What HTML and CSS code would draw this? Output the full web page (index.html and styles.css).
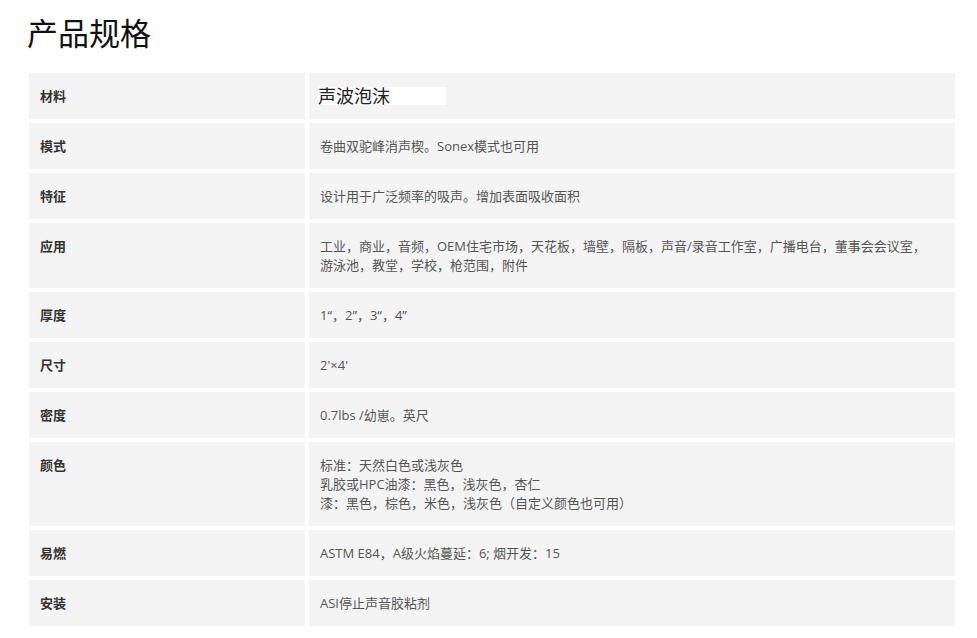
FILE: index.html
```html
<!DOCTYPE html>
<html lang="zh-CN">
  <head>
    <meta charset="UTF-8" />
    <meta name="viewport" content="width=device-width, initial-scale=1.0" />
    <title>产品规格</title>
    <link rel="stylesheet" href="styles.css">
  </head>
  <body>
    <div class="spec-container">
      <h1 class="spec-title">产品规格</h1>
      <table class="spec-table">
        <tr>
          <td class="spec-label">材料</td>
          <td class="spec-value"><span class="highlight">声波泡沫</span></td>
        </tr>
        <tr>
          <td class="spec-label">模式</td>
          <td class="spec-value">卷曲双驼峰消声楔。Sonex模式也可用</td>
        </tr>
        <tr>
          <td class="spec-label">特征</td>
          <td class="spec-value">设计用于广泛频率的吸声。增加表面吸收面积</td>
        </tr>
        <tr>
          <td class="spec-label">应用</td>
          <td class="spec-value">工业，商业，音频，OEM住宅市场，天花板，墙壁，隔板，声音/录音工作室，广播电台，董事会会议室，<br />游泳池，教堂，学校，枪范围，附件</td>
        </tr>
        <tr>
          <td class="spec-label">厚度</td>
          <td class="spec-value">1“，2”，3“，4”</td>
        </tr>
        <tr>
          <td class="spec-label">尺寸</td>
          <td class="spec-value">2'×4'</td>
        </tr>
        <tr>
          <td class="spec-label">密度</td>
          <td class="spec-value">0.7lbs /幼崽。英尺</td>
        </tr>
        <tr>
          <td class="spec-label">颜色</td>
          <td class="spec-value">标准：天然白色或浅灰色<br />乳胶或HPC油漆：黑色，浅灰色，杏仁<br />漆：黑色，棕色，米色，浅灰色（自定义颜色也可用）</td>
        </tr>
        <tr>
          <td class="spec-label">易燃</td>
          <td class="spec-value">ASTM E84，A级火焰蔓延：6; 烟开发：15</td>
        </tr>
        <tr>
          <td class="spec-label">安装</td>
          <td class="spec-value">ASI停止声音胶粘剂</td>
        </tr>
      </table>
    </div>
  </body>
</html>
```

FILE: styles.css
```css
body {
  margin: 0;
  padding: 0;
  background-color: #fff;
  font-family: "Open Sans", "Noto Sans CJK SC", sans-serif;
}

.spec-container {
  padding: 12px 0 0 25px;
}

.spec-title {
  font-family: "Noto Sans CJK SC", sans-serif;
  font-size: 31px;
  font-weight: normal;
  line-height: 40px;
  color: #111;
  margin: 0 0 17px 2px;
}

.spec-table {
  width: 934px;
  border-collapse: separate;
  border-spacing: 4px;
}

.spec-table td {
  background-color: #f4f4f4;
  font-size: 13px;
  line-height: 19px;
  padding: 14px 11px 13px;
  vertical-align: top;
}

.spec-label {
  width: 254px;
  font-weight: bold;
  color: #333;
}

.spec-value {
  color: #555;
}

.highlight {
  display: inline-block;
  vertical-align: top;
  background-color: #fff;
  font-size: 18px;
  line-height: 18px;
  color: #222;
  padding-right: 56px;
  margin-left: -2px;
}
```
